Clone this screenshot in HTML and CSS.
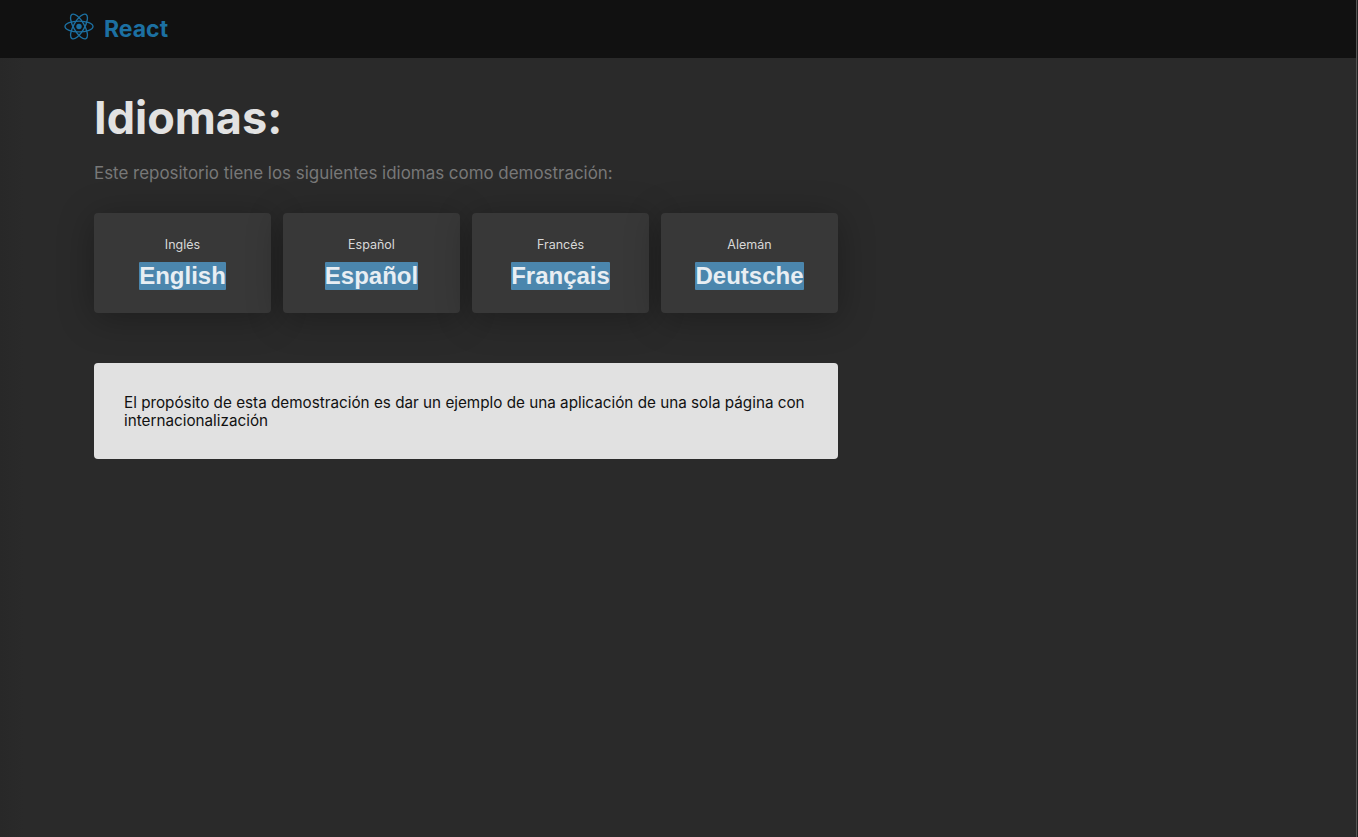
FILE: index.html
```html
<!DOCTYPE html>
<html lang="es">
<head>
<meta charset="utf-8">
<title>Idiomas</title>
<link rel="stylesheet" href="styles.css">
</head>
<body>
<div class="page">
<header class="navbar">
  <a class="brand" href="#">
    <svg class="brand-logo" viewBox="-15 -13.5 30 27" aria-hidden="true">
      <circle r="2.7" class="logo-core"></circle>
      <g class="logo-orbits">
        <ellipse rx="14" ry="5.4"></ellipse>
        <ellipse rx="14" ry="5.4" transform="rotate(60)"></ellipse>
        <ellipse rx="14" ry="5.4" transform="rotate(120)"></ellipse>
      </g>
    </svg>
    <span class="brand-name">React</span>
  </a>
</header>
<main class="content">
  <h1 class="title">Idiomas:</h1>
  <p class="subtitle">Este repositorio tiene los siguientes idiomas como demostración:</p>
  <section class="cards">
    <article class="card"><span class="card-label">Inglés</span><span class="card-word">English</span></article>
    <article class="card"><span class="card-label">Español</span><span class="card-word">Español</span></article>
    <article class="card"><span class="card-label">Francés</span><span class="card-word">Français</span></article>
    <article class="card"><span class="card-label">Alemán</span><span class="card-word">Deutsche</span></article>
  </section>
  <section class="note">
    <p>El propósito de esta demostración es dar un ejemplo de una aplicación de una sola página con internacionalización</p>
  </section>
</main>
</div>
</body>
</html>
```
FILE: styles.css
```css
* { box-sizing: border-box; }
html, body { height: 100%; }
html { background: #232323; }
body {
  margin: 0;
  padding-right: 1px;
  overflow: hidden;
  font-family: Inter, "Liberation Sans", sans-serif;
}
.page {
  height: 100%;
  background: linear-gradient(to right, #282828 0, #2a2a2a 24px);
  border-right: 1px solid #555555;
}
.navbar {
  height: 58px;
  background: #111111;
  padding-left: 64px;
  display: flex;
  align-items: center;
}
.brand {
  display: flex;
  align-items: center;
  gap: 10px;
  text-decoration: none;
}
.brand-logo { width: 30px; height: 27px; display: block; margin-top: -6px; }
.logo-core { fill: #1c70a2; }
.logo-orbits ellipse { fill: none; stroke: #1c70a2; stroke-width: 1.35; }
.brand-name {
  color: #1c70a2;
  font-size: 23px;
  font-weight: 700;
}
.content {
  width: 744px;
  margin-left: 94px;
  padding-top: 34px;
}
.title {
  margin: 0;
  font-size: 45px;
  line-height: 52px;
  font-weight: 700;
  color: #e2e2e2;
}
.subtitle {
  margin: 18px 0 0;
  font-size: 16.93px;
  line-height: 22px;
  color: #787878;
}
.cards {
  display: grid;
  grid-template-columns: repeat(4, 1fr);
  gap: 12px;
  margin-top: 29px;
}
.card {
  height: 100px;
  background: #383838;
  border-radius: 4px;
  box-shadow: 0 5px 36px rgba(0, 0, 0, 0.3);
  display: flex;
  flex-direction: column;
  align-items: center;
  padding-top: 24px;
}
.card-label {
  font-size: 12.5px;
  line-height: 15px;
  color: #d8d8d8;
}
.card-word {
  margin-top: 10px;
  font-family: "Liberation Sans", Arial, sans-serif;
  font-size: 24px;
  line-height: 28px;
  font-weight: 700;
  color: #e8eef3;
  background: #4b86ad;
  border-radius: 1px;
}
.note {
  margin-top: 50px;
  height: 96px;
  background: #e1e1e1;
  border-radius: 4px;
  padding: 31px 29px 30px 30px;
  color: #111111;
  font-size: 15.26px;
  line-height: 18px;
}
.note p { margin: 0; }
```
